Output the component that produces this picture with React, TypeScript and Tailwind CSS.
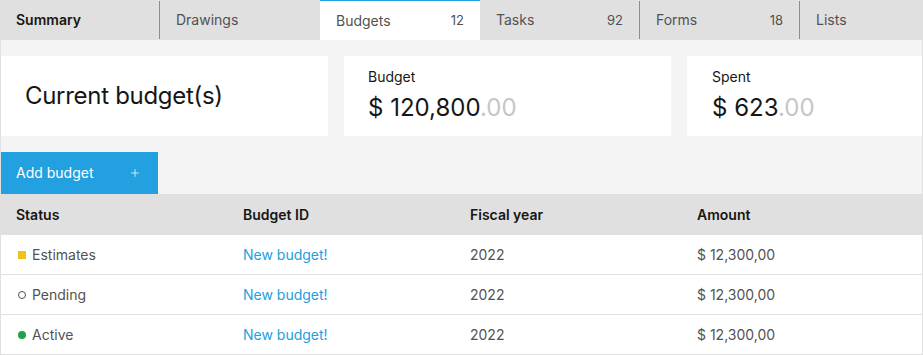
import { Plus } from 'lucide-react';

type Tab = { label: string; count?: number; active?: boolean; bold?: boolean; divider?: boolean };

const tabs: Tab[] = [
  { label: 'Summary', bold: true, divider: true },
  { label: 'Drawings' },
  { label: 'Budgets', count: 12, active: true },
  { label: 'Tasks', count: 92, divider: true },
  { label: 'Forms', count: 18, divider: true },
  { label: 'Lists' },
];

type Row = { status: 'estimates' | 'pending' | 'active'; label: string };

const rows: Row[] = [
  { status: 'estimates', label: 'Estimates' },
  { status: 'pending', label: 'Pending' },
  { status: 'active', label: 'Active' },
];

function StatusIcon({ status }: { status: Row['status'] }) {
  if (status === 'estimates') {
    return <span className="ml-[2px] w-2 h-2 bg-[#f1c21b]" />;
  }
  if (status === 'pending') {
    return <span className="ml-[2px] w-2 h-2 rounded-full border border-[#525252]" />;
  }
  return <span className="ml-[2px] w-2 h-2 rounded-full bg-[#24a148]" />;
}

export default function App() {
  return (
    <div className="w-[923px] h-[355px] overflow-hidden bg-[#f4f4f4] text-[#161616] font-['Inter',sans-serif]">
      {/* Tabs */}
      <div className="flex h-10 bg-[#e0e0e0] text-sm">
        {tabs.map((tab) => (
          <div
            key={tab.label}
            className={`flex w-40 shrink-0 ${tab.active ? 'bg-white border-t border-[#22a0df]' : ''}`}
          >
            <div className="flex flex-1 items-center justify-between px-4">
              <span className={tab.bold ? 'font-semibold text-[#161616]' : 'text-[#525252]'}>{tab.label}</span>
              {tab.count !== undefined && <span className="text-[13px] text-[#525252]">{tab.count}</span>}
            </div>
            {tab.divider && <div className="w-px my-px bg-[#8d8d8d]" />}
          </div>
        ))}
      </div>

      <div className="h-[315px] border-x border-[#e0e0e0]">
        {/* Summary cards */}
        <div className="flex gap-4 pt-4 overflow-hidden">
          <div className="w-[327px] h-20 shrink-0 bg-white flex items-center px-6">
            <h1 className="text-2xl tracking-[-0.3px]">Current budget(s)</h1>
          </div>
          <div className="w-[327px] h-20 shrink-0 bg-white px-6 pt-3">
            <p className="text-sm leading-[18px]">Budget</p>
            <p className="mt-1.5 text-2xl leading-8">
              $ 120,800<span className="text-[#c6c6c6]">.00</span>
            </p>
          </div>
          <div className="w-[327px] h-20 shrink-0 bg-white pl-[25px] pr-6 pt-3">
            <p className="text-sm leading-[18px]">Spent</p>
            <p className="mt-1.5 text-2xl leading-8">
              $ 623<span className="text-[#c6c6c6]">.00</span>
            </p>
          </div>
        </div>

        {/* Add button */}
        <button className="mt-4 w-[157px] h-[42px] bg-[#22a0df] text-white text-sm flex items-center justify-between pl-[15px] pr-[17px]">
          Add budget
          <Plus className="w-3 h-3" strokeWidth={1.5} />
        </button>

        {/* Table */}
        <div className="text-sm">
          <div className="grid grid-cols-[227px_227px_227px_1fr] items-center h-[41px] pl-[15px] bg-[#e0e0e0] font-semibold text-[#161616]">
            <div>Status</div>
            <div>Budget ID</div>
            <div>Fiscal year</div>
            <div>Amount</div>
          </div>
          {rows.map((row) => (
            <div
              key={row.label}
              className="grid grid-cols-[227px_227px_227px_1fr] items-center h-10 pl-[15px] bg-white border-b border-[#e0e0e0] text-[#525252]"
            >
              <div className="flex items-center gap-1.5">
                <StatusIcon status={row.status} />
                {row.label}
              </div>
              <div className="text-[#22a0df]">New budget!</div>
              <div>2022</div>
              <div>$ 12,300,00</div>
            </div>
          ))}
        </div>
      </div>
    </div>
  );
}
